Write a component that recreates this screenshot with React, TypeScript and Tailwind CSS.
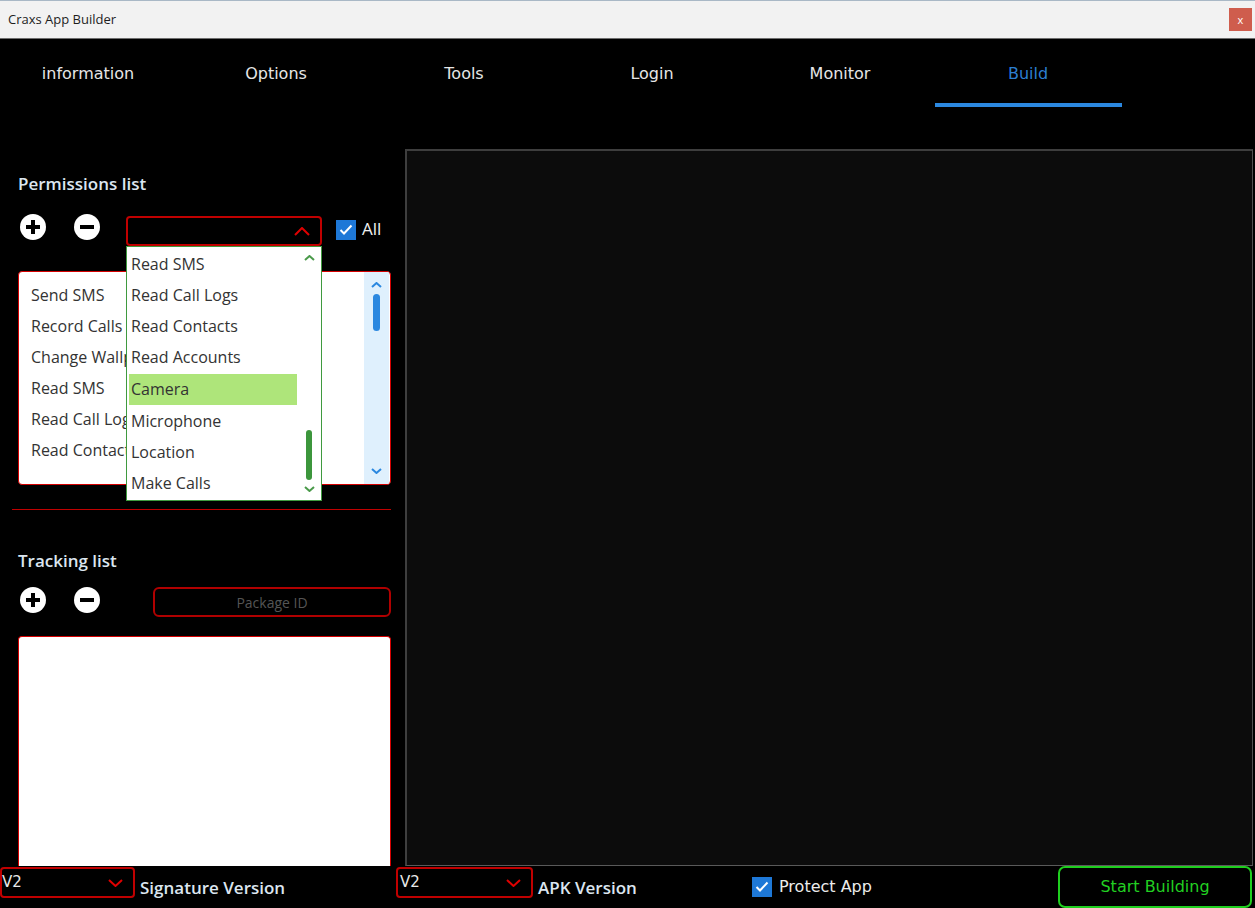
import React from "react";

const Chevron = ({ dir, color, w = 14, h = 8, sw = 2 }: { dir: "up" | "down"; color: string; w?: number; h?: number; sw?: number }) => (
  <svg width={w} height={h} viewBox={`0 0 ${w} ${h}`} fill="none">
    {dir === "up" ? (
      <polyline points={`1,${h - 1} ${w / 2},1 ${w - 1},${h - 1}`} stroke={color} strokeWidth={sw} />
    ) : (
      <polyline points={`1,1 ${w / 2},${h - 1} ${w - 1},1`} stroke={color} strokeWidth={sw} />
    )}
  </svg>
);

const PlusIcon = () => (
  <svg width="26" height="26" viewBox="0 0 26 26">
    <circle cx="13" cy="13" r="13" fill="#ffffff" />
    <rect x="6" y="11" width="14" height="4" fill="#000" />
    <rect x="11" y="6" width="4" height="14" fill="#000" />
  </svg>
);

const MinusIcon = () => (
  <svg width="26" height="26" viewBox="0 0 26 26">
    <circle cx="13" cy="13" r="13" fill="#ffffff" />
    <rect x="6" y="11" width="14" height="4" fill="#000" />
  </svg>
);

const CheckBox = () => (
  <div className="w-[20px] h-[20px] bg-[#1e78d7] flex items-center justify-center">
    <svg width="14" height="12" viewBox="0 0 14 12" fill="none">
      <polyline points="1.5,6 5,9.5 12.5,1.5" stroke="#ffffff" strokeWidth="2" />
    </svg>
  </div>
);

const tabs = ["information", "Options", "Tools", "Login", "Monitor", "Build"];
const perms = ["Send SMS", "Record Calls", "Change Wallpaper", "Read SMS", "Read Call Logs", "Read Contacts"];
const options = ["Read SMS", "Read Call Logs", "Read Contacts", "Read Accounts", "Camera", "Microphone", "Location", "Make Calls"];

export default function App() {
  const ui = { fontFamily: '"Open Sans", "Noto Sans", sans-serif' };
  const tech = { fontFamily: '"DejaVu Sans", sans-serif' };
  return (
    <div className="w-[1255px] h-[908px] flex flex-col bg-black overflow-hidden" style={ui}>
      {/* Title bar */}
      <div className="h-[39px] shrink-0 bg-[#f2f2f2] border-t border-t-[#a9b8c6] border-b border-b-[#6e6e6e] flex items-center pl-[8px] pr-[3px]">
        <span className="text-[13px] text-[#1e1e1e] leading-none">Craxs App Builder</span>
        <div className="ml-auto w-[23px] h-[23px] bg-[#cf5d4d] flex items-center justify-center text-white text-[11px] leading-none">x</div>
      </div>

      {/* Tabs */}
      <div className="h-[70px] shrink-0 flex -ml-[6px]" style={tech}>
        {tabs.map((t) => (
          <div key={t} className="w-[188px] flex flex-col items-center pt-[24px]">
            <span className={`text-[16px] leading-[22px] ${t === "Build" ? "text-[#2c7fd2]" : "text-[#e6e6e6]"}`}>{t}</span>
            {t === "Build" && <div className="mt-[18px] w-[187px] h-[4px] bg-[#2b88e0]" />}
          </div>
        ))}
      </div>

      {/* Middle */}
      <div className="flex-1 flex min-h-0">
        {/* Left column */}
        <div className="w-[405px] shrink-0 flex flex-col pl-[18px] pr-[14px]">
          <div className="mt-[64px] text-[17px] leading-[22px] text-[#dce6f0] font-semibold">Permissions list</div>
          <div className="mt-[19px] flex items-start pl-[2px] h-[32px]">
            <PlusIcon />
            <div className="ml-[28px]"><MinusIcon /></div>
            <div className="relative ml-[26px] mt-[2px]">
              <div className="w-[196px] h-[30px] border-2 border-[#c00000] rounded-[4px] bg-black flex items-center justify-end pr-[10px]">
                <Chevron dir="up" color="#e00000" w={16} h={9} />
              </div>
              {/* Open dropdown */}
              <div className="absolute left-0 top-[30px] w-[196px] h-[255px] bg-white border border-[#3f9a3f] z-10 flex">
                <div className="flex-1 flex flex-col pt-[2px] pl-[2px]">
                  {options.map((o) => (
                    <div
                      key={o}
                      className={`h-[31px] leading-[31px] pl-[2px] text-[16px] text-[#333333] whitespace-nowrap ${o === "Camera" ? "bg-[#aee57a] h-[29px] leading-[29px] my-[1px]" : ""}`}
                    >
                      {o}
                    </div>
                  ))}
                </div>
                <div className="w-[24px] flex flex-col items-center pt-[8px] pb-[8px]">
                  <Chevron dir="up" color="#4a9a4a" w={11} h={6} />
                  <div className="flex-1" />
                  <div className="w-[6px] h-[50px] rounded-full bg-[#3c963c] mb-[6px]" />
                  <Chevron dir="down" color="#4a9a4a" w={11} h={6} />
                </div>
              </div>
            </div>
            <div className="ml-[14px] mt-[6px]"><CheckBox /></div>
            <span className="ml-[6px] mt-[4px] text-[17px] leading-[22px] text-[#f0f0f0]">All</span>
          </div>

          {/* Permissions list box */}
          <div className="mt-[25px] w-[373px] h-[214px] bg-white border border-[#d40000] rounded-[4px] flex overflow-hidden">
            <div className="flex-1 pl-[12px] pt-[8px] overflow-hidden">
              {perms.map((p) => (
                <div key={p} className="h-[31px] leading-[31px] text-[16px] text-[#333333] whitespace-nowrap">{p}</div>
              ))}
            </div>
            <div className="w-[25px] mr-[1px] bg-[#dff0fd] flex flex-col items-center pt-[10px] pb-[10px]">
              <Chevron dir="up" color="#2b88e0" w={11} h={6} />
              <div className="mt-[6px] w-[7px] h-[37px] rounded-full bg-[#2b88e0]" />
              <div className="flex-1" />
              <Chevron dir="down" color="#2b88e0" w={11} h={6} />
            </div>
          </div>

          <div className="mt-[24px] -ml-[6px] w-[379px] h-px bg-[#c00000]" />

          <div className="mt-[40px] text-[17px] leading-[22px] text-[#dce6f0] font-semibold">Tracking list</div>
          <div className="mt-[15px] flex items-start pl-[2px]">
            <PlusIcon />
            <div className="ml-[28px]"><MinusIcon /></div>
            <div className="ml-[53px] w-[238px] h-[30px] border-2 border-[#b00000] rounded-[6px] flex items-center justify-center text-[14px] text-[#555555]">
              Package ID
            </div>
          </div>
          <div className="mt-[19px] flex-1 w-[373px] bg-white border border-[#d40000] border-b-0 rounded-t-[4px]" />
        </div>

        {/* Right panel */}
        <div className="flex-1 mt-[40px] mr-[2px] bg-[#0c0c0c] border-t-2 border-l-2 border-[#3e3e3e] border-b border-b-[#5a5a5a] border-r border-r-[#505050]" />
      </div>

      {/* Bottom bar */}
      <div className="h-[42px] shrink-0 flex items-start">
        <div className="w-[396px] flex items-start">
          <div className="mt-[1px] w-[135px] h-[31px] border-2 border-[#c00000] rounded-[4px] flex items-center pl-[0px] pr-[10px]">
            <span className="text-[15px] text-[#e8e8e8] leading-none" style={tech}>V2</span>
            <div className="ml-auto"><Chevron dir="down" color="#e00000" w={15} h={8} /></div>
          </div>
          <span className="ml-[5px] mt-[11px] text-[17px] leading-[22px] text-[#dce6f0] font-semibold">Signature Version</span>
        </div>
        <div className="w-[356px] flex items-start">
          <div className="mt-[1px] w-[137px] h-[31px] border-2 border-[#c00000] rounded-[4px] flex items-center pl-[2px] pr-[10px]">
            <span className="text-[15px] text-[#e8e8e8] leading-none" style={tech}>V2</span>
            <div className="ml-auto"><Chevron dir="down" color="#e00000" w={15} h={8} /></div>
          </div>
          <span className="ml-[5px] mt-[11px] text-[17px] leading-[22px] text-[#dce6f0] font-semibold">APK Version</span>
        </div>
        <div className="mt-[11px]"><CheckBox /></div>
        <span className="ml-[7px] mt-[10px] text-[16px] leading-[22px] text-[#ececec]" style={tech}>Protect App</span>
        <div
          className="ml-auto mr-[3px] w-[194px] h-[42px] border-2 border-[#1fcf1f] rounded-[7px] flex items-center justify-center text-[16px] text-[#22d022]"
          style={tech}
        >
          Start Building
        </div>
      </div>
    </div>
  );
}
